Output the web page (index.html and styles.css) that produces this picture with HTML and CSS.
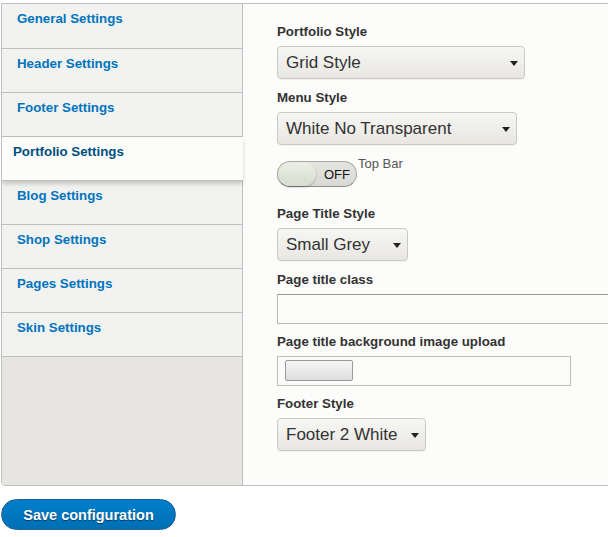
FILE: index.html
```html
<!DOCTYPE html>
<html>
<head>
<meta charset="utf-8">
<link rel="stylesheet" href="styles.css">
</head>
<body>
<div class="page">
  <div class="vtabs">
    <ul class="tab-list">
      <li class="tab first"><a>General Settings</a></li>
      <li class="tab"><a>Header Settings</a></li>
      <li class="tab"><a>Footer Settings</a></li>
      <li class="tab active"><a>Portfolio Settings</a></li>
      <li class="tab"><a>Blog Settings</a></li>
      <li class="tab"><a>Shop Settings</a></li>
      <li class="tab"><a>Pages Settings</a></li>
      <li class="tab"><a>Skin Settings</a></li>
    </ul>
    <div class="pane">
      <div class="field">
        <div class="label">Portfolio Style</div>
        <div class="select w-portfolio"><span>Grid Style</span><span class="caret"></span></div>
      </div>
      <div class="field">
        <div class="label">Menu Style</div>
        <div class="select w-menu"><span>White No Transparent</span><span class="caret"></span></div>
      </div>
      <div class="field toggle-field">
        <div class="toggle"><span class="knob"></span><span class="off">OFF</span></div>
        <span class="toggle-label">Top Bar</span>
      </div>
      <div class="field">
        <div class="label">Page Title Style</div>
        <div class="select w-title"><span>Small Grey</span><span class="caret"></span></div>
      </div>
      <div class="field tight">
        <div class="label">Page title class</div>
        <div class="text-input"></div>
      </div>
      <div class="field tight">
        <div class="label">Page title background image upload</div>
        <div class="file-input"><span class="file-btn"></span></div>
      </div>
      <div class="field last">
        <div class="label">Footer Style</div>
        <div class="select w-footer"><span>Footer 2 White</span><span class="caret"></span></div>
      </div>
    </div>
  </div>
  <div class="actions">
    <button class="save">Save configuration</button>
  </div>
</div>
</body>
</html>
```

FILE: styles.css
```css
html, body {
  margin: 0;
  padding: 0;
  background: #ffffff;
  overflow: hidden;
}
body {
  font-family: "Liberation Sans", Arial, sans-serif;
  color: #333;
}
.page {
  padding: 3px 0 0 1px;
  width: 700px;
}
.vtabs {
  display: flex;
  border: 1px solid #bfbfbf;
  border-bottom-left-radius: 4px;
  height: 483px;
  box-sizing: border-box;
  width: 660px;
  overflow: hidden;
}
.tab-list {
  list-style: none;
  margin: 0;
  padding: 0;
  width: 240px;
  flex: none;
  background: #e6e5e1;
  border-right: 1px solid #bfbfbf;
  position: relative;
  z-index: 1;
}
.tab {
  height: 43px;
  border-bottom: 1px solid #bfbfbf;
  background: #f2f2f0;
  box-sizing: content-box;
}
.tab.first {
  height: 44px;
}
.tab a {
  display: block;
  padding: 6px 0 0 15px;
  font-size: 13.3px;
  line-height: 18px;
  font-weight: bold;
  color: #0074bd;
}
.tab.active {
  background: #fcfcfa;
  margin-right: -1px;
  box-shadow: 0 3px 4px rgba(0, 0, 0, 0.18);
  position: relative;
}
.tab.active a {
  padding: 6px 0 0 11px;
  color: #004f80;
}
.pane {
  flex: 1;
  background: #fcfcfa;
  padding: 19px 0 0 34px;
}
.field {
  margin-bottom: 10px;
}
.field.tight {
  margin-bottom: 9px;
}
.label {
  font-size: 13.3px;
  line-height: 18px;
  font-weight: bold;
  color: #333;
  margin-bottom: 5px;
}
.select {
  box-sizing: border-box;
  height: 33px;
  border: 1px solid #cac9c4;
  border-radius: 4px;
  background: linear-gradient(#f6f6f3, #e8e7e2);
  box-shadow: 0 1px 1px rgba(0, 0, 0, 0.05);
  display: flex;
  align-items: center;
  justify-content: space-between;
  padding: 0 6px 0 8px;
  font-size: 17px;
  color: #333;
}
.caret {
  width: 0;
  height: 0;
  border-left: 4px solid transparent;
  border-right: 4px solid transparent;
  border-top: 5px solid #222;
  margin-top: 2px;
}
.w-portfolio { width: 248px; }
.w-menu { width: 240px; }
.w-title { width: 131px; }
.w-footer { width: 149px; }
.toggle-field {
  display: flex;
  align-items: flex-start;
  margin-top: 16px;
  margin-bottom: 18px;
}
.toggle {
  box-sizing: border-box;
  width: 80px;
  height: 26px;
  border: 1px solid #a9a9a6;
  border-bottom-color: #8d8d8a;
  border-radius: 13px;
  background: linear-gradient(#e4e4e1, #d9d9d6);
  display: flex;
  align-items: center;
  padding: 0;
}
.knob {
  width: 38px;
  height: 24px;
  border-radius: 12px;
  background: linear-gradient(#eceee6, #d7dccd);
  box-shadow: 0 1px 2px rgba(0, 0, 0, 0.3);
}
.off {
  margin-left: 8px;
  font-size: 13px;
  color: #111;
}
.toggle-label {
  font-size: 13px;
  color: #555;
  line-height: 16px;
  margin-top: -5px;
  margin-left: 1px;
}
.text-input {
  box-sizing: border-box;
  width: 360px;
  height: 30px;
  border: 1px solid #b8b8b8;
  border-top-color: #999;
  background: #fcfcfa;
}
.file-input {
  box-sizing: border-box;
  width: 294px;
  height: 30px;
  border: 1px solid #bdbdbd;
  background: #fcfcfa;
  padding: 3px 0 0 7px;
}
.file-btn {
  display: block;
  box-sizing: border-box;
  width: 68px;
  height: 21px;
  border: 1px solid #9a9a9a;
  border-radius: 2px;
  background: linear-gradient(#f6f6f6, #dedede);
}
.field.last {
  margin-bottom: 0;
}
.actions {
  padding-top: 13px;
}
.save {
  box-sizing: border-box;
  width: 175px;
  height: 31px;
  border: 1px solid #1b5f94;
  border-radius: 16px;
  background: linear-gradient(#007fcc, #006fb4);
  color: #fff;
  font-family: "Liberation Sans", Arial, sans-serif;
  font-weight: bold;
  font-size: 14.5px;
  text-shadow: 0 1px 1px rgba(0, 0, 0, 0.5);
  padding: 0;
  margin: 0;
}
```
